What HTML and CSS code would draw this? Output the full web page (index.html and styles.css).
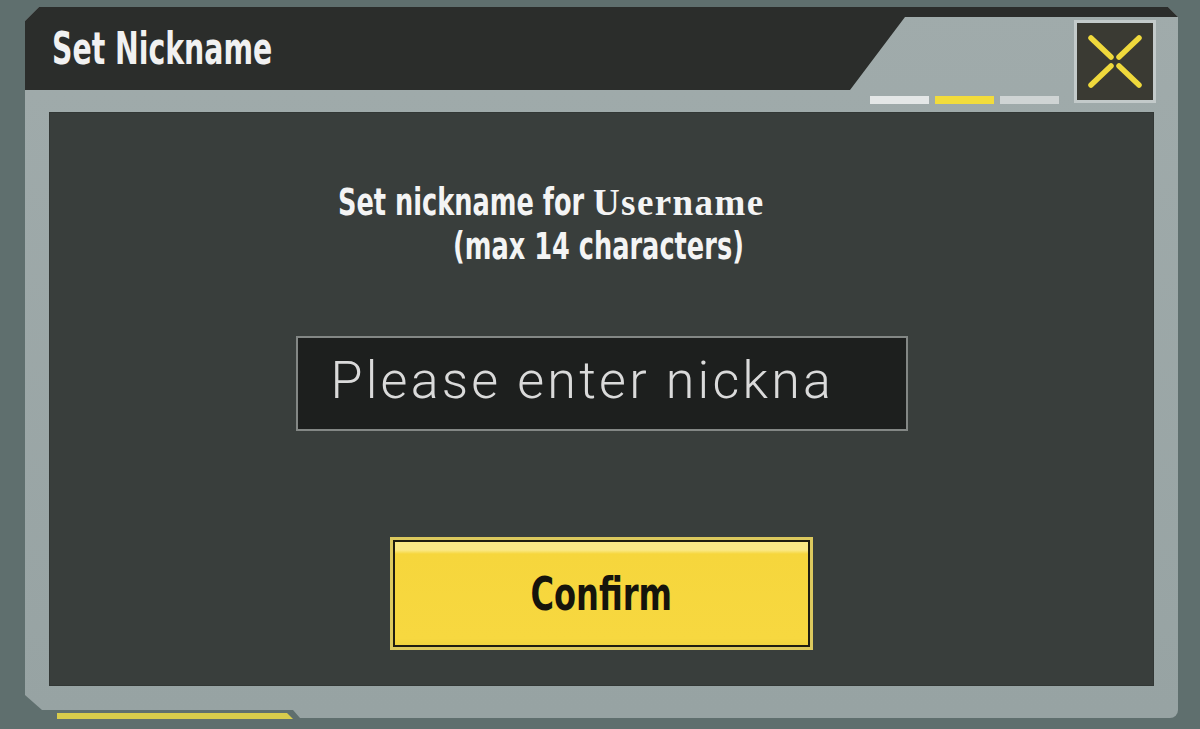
FILE: index.html
```html
<!DOCTYPE html>
<html lang="en">
<head>
<meta charset="utf-8">
<title>Set Nickname</title>
<link rel="stylesheet" href="styles.css">
</head>
<body>
<div class="window">
  <div class="window-body">
    <div class="header">
      <h1 class="title"><span class="title-text">Set Nickname</span></h1>
      <div class="pager">
        <span class="pager-bar pager-bar-white"></span>
        <span class="pager-bar pager-bar-active"></span>
        <span class="pager-bar pager-bar-grey"></span>
      </div>
      <div class="close">
        <svg class="close-icon" viewBox="0 0 76 77" width="76" height="77">
          <g stroke="#efd93c" stroke-width="5.5" stroke-linecap="round">
            <line x1="14" y1="15" x2="34" y2="34"/>
            <line x1="62" y1="15" x2="42" y2="34"/>
            <line x1="14" y1="62" x2="34" y2="43"/>
            <line x1="62" y1="62" x2="42" y2="43"/>
          </g>
        </svg>
      </div>
    </div>
    <div class="panel">
      <div class="prompt">
        <div class="prompt-line">
          <span class="prompt-lead"><span class="cond">Set nickname for</span></span><span class="prompt-user">Username</span>
        </div>
        <div class="prompt-line prompt-line-second"><span class="cond">(max 14 characters)</span></div>
      </div>
      <div class="nick-input">Please enter nickna</div>
      <div class="confirm"><span class="confirm-label">Confirm</span></div>
    </div>
  </div>
  <div class="foot">
    <span class="foot-accent"></span>
    <span class="foot-tail"></span>
  </div>
</div>
</body>
</html>
```
FILE: styles.css
```css
html, body {
  margin: 0;
  padding: 0;
}
body {
  background: #5f6f6e;
  padding: 7px 22px 0 25px;
  width: 1200px;
  height: 729px;
  box-sizing: border-box;
  overflow: hidden;
  font-family: "DejaVu Sans Condensed", "DejaVu Sans", sans-serif;
}
.window {
  width: 1153px;
  display: flex;
  flex-direction: column;
}
.window-body {
  height: 703px;
  background: linear-gradient(180deg, #a0abab 0%, #97a3a3 100%);
  clip-path: polygon(0 14px, 14px 0, calc(100% - 10px) 0, 100% 10px, 100% 100%, 17px 100%, 0 calc(100% - 15px));
  display: flex;
  flex-direction: column;
}
.header {
  height: 105px;
  position: relative;
  isolation: isolate;
  display: flex;
  align-items: flex-start;
  flex-shrink: 0;
}
.header::before {
  content: "";
  position: absolute;
  left: 0;
  top: 0;
  width: 100%;
  height: 83px;
  background: #2b2d2b;
  clip-path: polygon(0 0, 100% 0, 100% 10px, 880px 10px, 825px 100%, 0 100%);
  z-index: -1;
}
.title {
  flex: 1;
  margin: 0;
  padding: 17px 0 0 27px;
  font-size: 45px;
  line-height: 50px;
  font-weight: bold;
  color: #f1f1f1;
}
.title-text {
  display: inline-block;
  white-space: nowrap;
  transform: scaleX(0.7);
  transform-origin: left center;
}
.pager {
  display: flex;
  gap: 6px;
  align-self: flex-end;
  margin: 0 15px 8px 0;
}
.pager-bar {
  width: 59px;
  height: 8px;
  display: block;
}
.pager-bar-white { background: #e4e7e7; }
.pager-bar-active { background: #f2dc3c; }
.pager-bar-grey { background: #cfd4d4; }
.close {
  width: 82px;
  height: 83px;
  box-sizing: border-box;
  margin: 13px 22px 0 0;
  border: 3px solid #c3caca;
  background: #3a3a33;
  display: flex;
}
.close-icon {
  display: block;
}
.panel {
  margin: 0 24px;
  height: 574px;
  background: #393e3c;
  box-shadow: inset 0 0 0 1px #323735;
  display: flex;
  flex-direction: column;
  align-items: center;
}
.prompt {
  align-self: flex-start;
  margin: 69px 0 0 289px;
  font-size: 37px;
  line-height: 44px;
  font-weight: bold;
  color: #f4f4f4;
}
.prompt-line {
  white-space: nowrap;
}
.prompt-line-second {
  margin-left: 115px;
}
.prompt-lead {
  display: inline-block;
  width: 255px;
}
.cond {
  display: inline-block;
  white-space: nowrap;
  transform: scaleX(0.77);
  transform-origin: left center;
}
.prompt-user {
  font-family: "Liberation Serif", serif;
  font-size: 37px;
  letter-spacing: 1.4px;
}
.nick-input {
  margin-top: 67px;
  width: 612px;
  height: 95px;
  box-sizing: border-box;
  border: 2px solid #838785;
  background: #1d1f1e;
  padding: 0 0 6px 33px;
  display: flex;
  align-items: center;
  font-family: "Roboto", sans-serif;
  font-weight: 300;
  font-size: 52px;
  letter-spacing: 3.2px;
  color: #dadada;
  white-space: nowrap;
}
.confirm {
  margin-top: 106px;
  width: 423px;
  height: 113px;
  box-sizing: border-box;
  border: 3px solid #dcc95e;
  box-shadow: inset 0 0 0 2px #1f1d10;
  background: linear-gradient(180deg, #1f1d10 0, #1f1d10 2px, #fbe986 2px, #fbe986 10px, #f6d63c 14px, #f7d840 92%, #efd23c 100%);
  display: flex;
  align-items: center;
  justify-content: center;
}
.confirm-label {
  display: inline-block;
  font-size: 47px;
  font-weight: bold;
  color: #15140c;
  transform: scaleX(0.76);
  transform-origin: center;
}
.foot {
  display: flex;
  height: 8px;
}
.foot-accent {
  display: block;
  margin: 3px 0 0 32px;
  width: 236px;
  height: 6px;
  background: #d8cc4c;
  clip-path: polygon(0 0, calc(100% - 6px) 0, 100% 100%, 0 100%);
}
.foot-tail {
  display: block;
  flex: 1;
  background: #97a3a3;
  border-bottom-right-radius: 8px;
  clip-path: polygon(0 0, 100% 0, 100% 100%, 7px 100%);
}
```
